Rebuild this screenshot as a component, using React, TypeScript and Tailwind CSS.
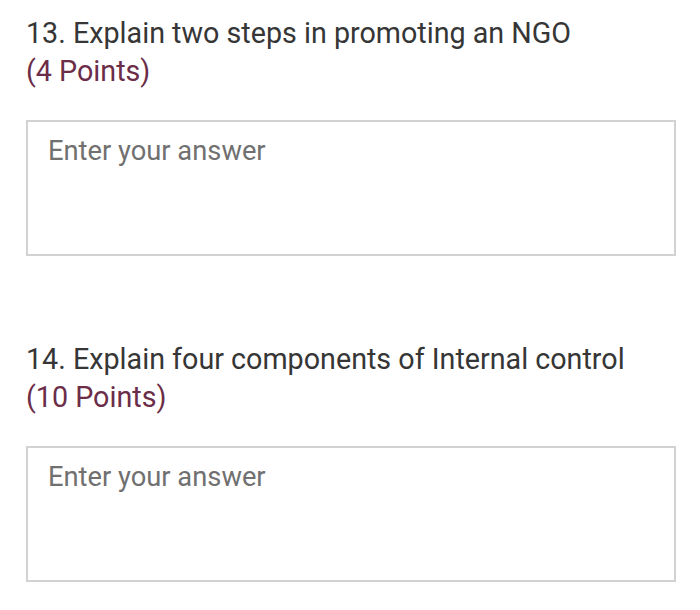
export default function App() {
  const questions = [
    { n: 13, text: "Explain two steps in promoting an NGO", points: "(4 Points)" },
    { n: 14, text: "Explain four components of Internal control", points: "(10 Points)" },
  ];

  return (
    <div className="w-[700px] h-[610px] bg-white font-['Roboto',sans-serif] pt-[14px] pl-[26px] pr-[24px]">
      {questions.map((q, i) => (
        <div key={q.n} className={i > 0 ? "mt-[84px]" : ""}>
          <div className="text-[28.7px] leading-[38px] text-[#363636]">
            {q.n}. {q.text}
          </div>
          <div className="text-[28.7px] leading-[38px] text-[#6b2d48]">{q.points}</div>
          <div className="mt-[30px] h-[136px] border-2 border-[#d2d2d2] px-[20px] pt-[11px] text-[27.3px] leading-[36px] text-[#707070]">
            Enter your answer
          </div>
        </div>
      ))}
    </div>
  );
}
